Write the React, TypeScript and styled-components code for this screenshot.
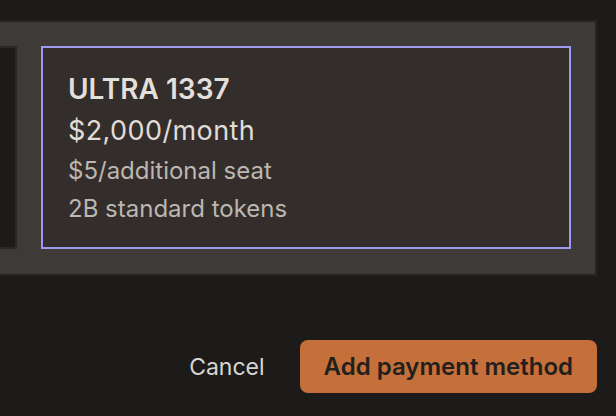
import React from "react";
import styled, { createGlobalStyle } from "styled-components";

type TPlan = {
  name: string;
  price: string;
  seat: string;
  tokens: string;
  selected?: boolean;
};

const plans: TPlan[] = [
  {
    name: "PRO 42",
    price: "$200/month",
    seat: "$2/additional seat",
    tokens: "200M standard tokens",
  },
  {
    name: "ULTRA 1337",
    price: "$2,000/month",
    seat: "$5/additional seat",
    tokens: "2B standard tokens",
    selected: true,
  },
];

const GlobalStyle = createGlobalStyle`
  html, body {
    margin: 0;
    padding: 0;
    background: #1c1b1a;
  }
  body {
    font-family: Inter, "Noto Sans", "Liberation Sans", sans-serif;
    -webkit-font-smoothing: antialiased;
  }
`;

const Page = styled.div`
  width: 616px;
  height: 416px;
  box-sizing: border-box;
  padding: 20px 19px 0 0;
  display: flex;
  flex-direction: column;
  overflow: hidden;
`;

const PlanStrip = styled.div`
  display: flex;
  justify-content: flex-end;
  gap: 24px;
  padding: 24px 24px 25px 0;
  background: #3e3a37;
  border: 2px solid #272523;
  border-left: none;
  overflow: hidden;
`;

const PlanCard = styled.div<{ $selected?: boolean }>`
  flex: 0 0 530px;
  box-sizing: border-box;
  height: 203px;
  padding: 24px 24px 22px 25px;
  display: flex;
  flex-direction: column;
  gap: 8px;
  background: ${(p) => (p.$selected ? "#332e2b" : "#1e1c1b")};
  border: 2px solid ${(p) => (p.$selected ? "#9b9af0" : "#2b2927")};
`;

const PlanName = styled.div`
  font-size: 28px;
  line-height: 34px;
  font-weight: 600;
  color: #e3dfdb;
`;

const PlanPrice = styled.div`
  font-size: 27px;
  line-height: 34px;
  letter-spacing: 0.4px;
  font-weight: 400;
  color: #e0dcd7;
`;

const PlanDetail = styled.div`
  font-size: 24px;
  line-height: 30px;
  color: #bcb7b1;
`;

const Actions = styled.div`
  margin-top: 64px;
  display: flex;
  justify-content: flex-end;
  align-items: center;
  gap: 15px;
`;

const Button = styled.button<{ $primary?: boolean }>`
  height: 53px;
  padding: 0 ${(p) => (p.$primary ? "24px" : "20px")};
  border: none;
  border-radius: 8px;
  font-family: inherit;
  font-size: ${(p) => (p.$primary ? "24px" : "23px")};
  font-weight: ${(p) => (p.$primary ? 600 : 400)};
  color: ${(p) => (p.$primary ? "#221f1d" : "#d9d5d0")};
  background: ${(p) => (p.$primary ? "#c5703a" : "transparent")};
  cursor: pointer;
`;

export default function App() {
  return (
    <>
      <GlobalStyle />
      <Page>
        <PlanStrip>
          {plans.map((plan) => (
            <PlanCard key={plan.name} $selected={plan.selected}>
              <PlanName>{plan.name}</PlanName>
              <PlanPrice>{plan.price}</PlanPrice>
              <PlanDetail>{plan.seat}</PlanDetail>
              <PlanDetail>{plan.tokens}</PlanDetail>
            </PlanCard>
          ))}
        </PlanStrip>
        <Actions>
          <Button>Cancel</Button>
          <Button $primary>Add payment method</Button>
        </Actions>
      </Page>
    </>
  );
}
